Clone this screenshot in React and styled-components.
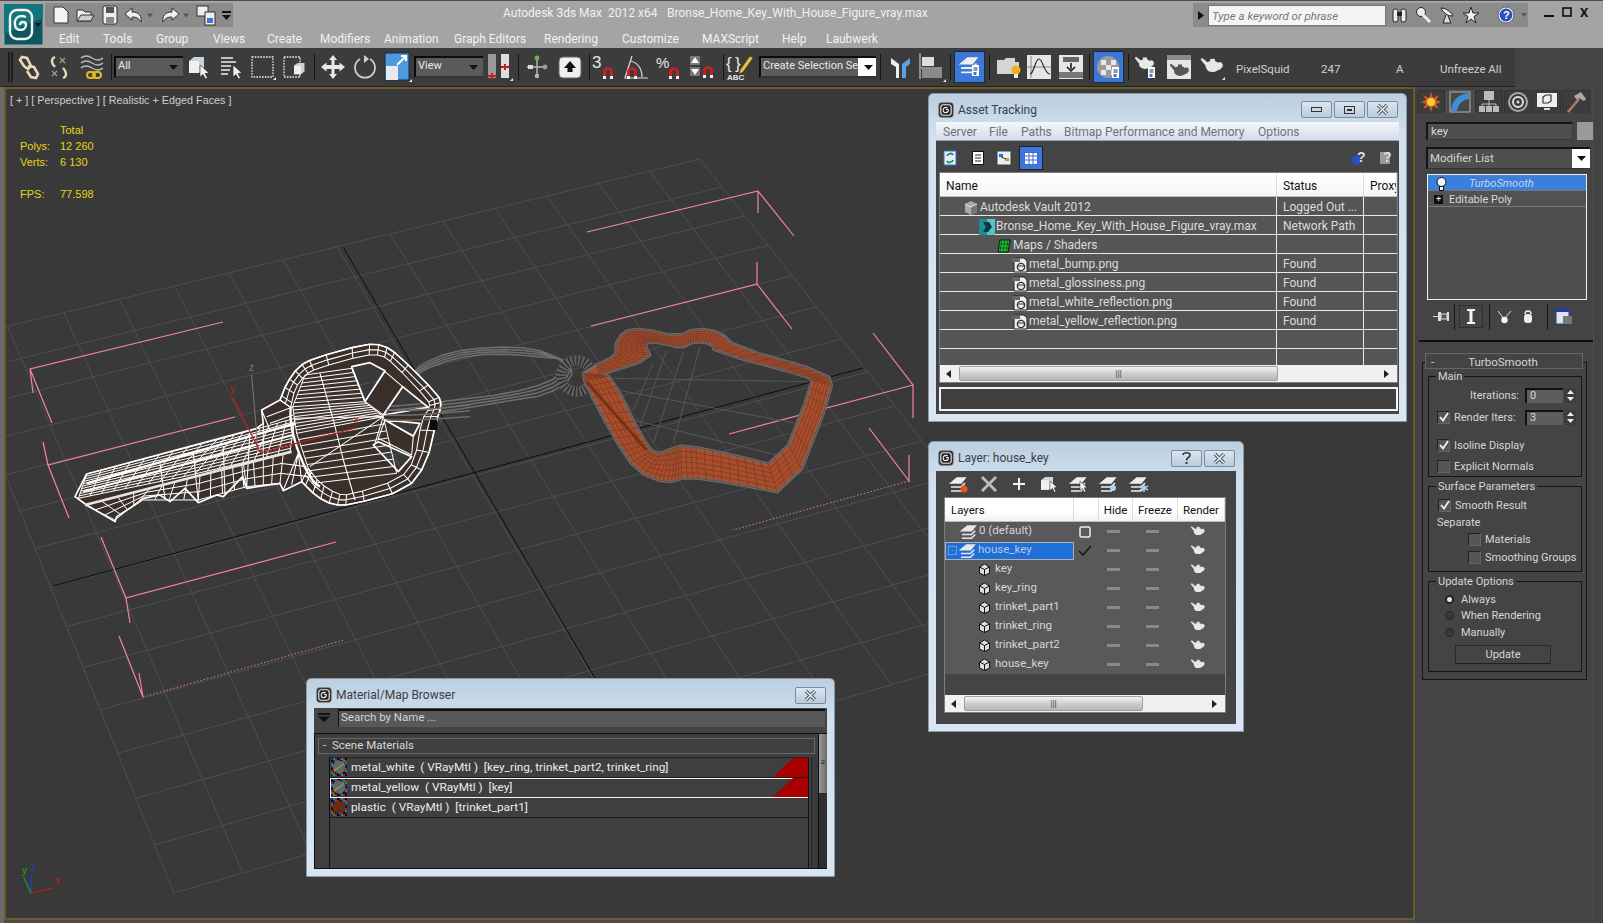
import React from "react";
import styled, { createGlobalStyle } from "styled-components";

const uiFont = `Roboto, "Noto Sans", sans-serif`;

const GlobalStyle = createGlobalStyle`
	html, body { margin: 0; padding: 0; background: #3d3d3d; }
	* { box-sizing: border-box; }
`;

const Page = styled.div`
	position: relative;
	width: 1603px;
	height: 923px;
	overflow: hidden;
	background: #4a4a4a;
	font-family: ${uiFont};
	font-size: 11.5px;
	color: #d6d6d6;
`;

/* ---------- header ---------- */

const Header = styled.div`
	display: flex;
	height: 48px;
	padding-left: 4px;
	background: #a4a4a4;
	border-top: 1px solid #4c4c4c;
`;
const LogoBox = styled.svg`
	flex: none;
	width: 39px;
	height: 41px;
	margin-top: 3px;
`;
const HeaderColumn = styled.div`
	margin-left: 2px;
	flex: 1;
	min-width: 0;
`;
const TitleRow = styled.div`
	display: flex;
	height: 24px;
	margin-top: 2px;
`;
const QuickBar = styled.div`
	flex: none;
	width: 188px;
	display: flex;
	align-items: center;
	padding-left: 6px;
	gap: 1px;
	background: #8b8b8b;
`;
const TitleText = styled.div`
	flex: none;
	width: ${p => p.$w}px;
	margin-left: ${p => p.$ml || 0}px;
	padding-top: 2px;
	line-height: 17px;
	font-size: 12px;
	color: #f0f0f0;
	white-space: pre;
`;
const SearchGroup = styled.div`
	flex: none;
	width: 335px;
	display: flex;
	align-items: center;
	background: #8b8b8b;
	padding-left: 5px;
`;
const SearchInput = styled.div`
	width: 178px;
	height: 21px;
	margin-left: 4px;
	padding-left: 3px;
	line-height: 21px;
	background: #f4f4f4;
	border: 1px solid #777;
	color: #777;
	font-style: italic;
	font-size: 11.5px;
`;
const WinControls = styled.div`
	display: flex;
	gap: 8px;
	margin-left: 16px;
	align-items: center;
	height: 18px;
	color: #111;
	font-weight: 700;
	font-size: 13px;
`;
const MenuRow = styled.div`
	display: flex;
	height: 18px;
	margin-top: 3px;
	padding-left: 14px;
`;
const MenuItem = styled.div`
	flex: none;
	width: ${p => p.$w}px;
	font-size: 12px;
	line-height: 18px;
	color: #f2f2f2;
`;

/* ---------- main toolbar ---------- */

const ToolbarWrap = styled.div`
	height: 39px;
	background: #444;
`;
const Toolbar = styled.div`
	display: flex;
	align-items: center;
	width: 1515px;
	height: 39px;
	padding-left: 8px;
	background: #3c3c3c;
	border-bottom: 1px solid #222;
`;
const Grip = styled.div`
	flex: none;
	width: 5px;
	height: 30px;
	border-left: 2px solid #1c1c1c;
	border-right: 2px solid #1c1c1c;
`;
const Tool = styled.div`
	flex: none;
	width: ${p => p.$w}px;
	height: ${p => (p.$on ? 32 : 30)}px;
	display: flex;
	align-items: center;
	justify-content: center;
	background: ${p => (p.$on ? "#3d78d8" : "transparent")};
	border: ${p => (p.$on ? "1px solid #1a2a40" : "none")};
`;
const ToolSep = styled.div`
	flex: none;
	width: ${p => p.$w}px;
	height: 26px;
	display: flex;
	justify-content: center;
	&::before {
		content: "";
		width: 1px;
		background: #161616;
	}
`;
const Spacer = styled.div`
	flex: none;
	width: ${p => p.$w}px;
`;
const Combo = styled.div`
	flex: none;
	width: ${p => p.$w}px;
	height: 22px;
	display: flex;
	align-items: center;
	justify-content: space-between;
	padding: 0 4px 3px 2px;
	background: #5a5a5a;
	border: 2px solid #0c0c0c;
	border-right: none;
	border-bottom-color: #333;
	font-size: 11px;
	color: #e8e8e8;
	white-space: nowrap;
	overflow: hidden;
`;
const ComboEnd = styled.span`
	flex: none;
	width: 20px;
	margin: -3px -4px -6px 0;
	align-self: stretch;
	display: flex;
	align-items: center;
	justify-content: center;
	background: ${p => (p.$dark ? "#5a5a5a" : "#fff")};
	color: #111;
	font-size: 9px;
`;
const ToolLabel = styled.div`
	flex: none;
	width: ${p => p.$w}px;
	margin-top: 3px;
	font-size: 11.5px;
	color: #cfcfcf;
	white-space: nowrap;
`;
const Icon = styled.svg`
	display: block;
	flex: none;
	overflow: visible;
`;

/* ---------- viewport ---------- */

const Body = styled.div`
	display: flex;
	height: 836px;
`;
const LeftStrip = styled.div`
	flex: none;
	width: 4px;
	background: #6b6b6b;
`;
const Viewport = styled.div`
	position: relative;
	flex: none;
	width: 1411px;
	height: 833px;
	background: #393939;
	border: 2px solid #6b5b24;
	overflow: hidden;
`;
const Scene = styled.svg`
	display: block;
`;
const ViewLabel = styled.div`
	position: absolute;
	left: 4px;
	top: 4px;
	font-family: "Liberation Sans", sans-serif;
	font-size: 10.8px;
	line-height: 15px;
	color: #cfcfcf;
`;
const Stats = styled.div`
	position: absolute;
	left: 14px;
	top: 33px;
	display: grid;
	grid-template-columns: 40px auto;
	grid-auto-rows: 16px;
	font-family: "Liberation Sans", sans-serif;
	font-size: 11px;
	line-height: 16px;
	color: #e6d516;
`;

/* ---------- command panel ---------- */

const Panel = styled.div`
	flex: 1;
	padding-top: 3px;
	background: linear-gradient(90deg, #444 178px, #505050 178px, #505050 179px, #434343 179px);
	font-size: 11px;
`;
const PanelTabs = styled.div`
	display: flex;
	gap: 1px;
	margin-left: 2px;
	height: 23px;
`;
const PanelTab = styled.div`
	width: 28px;
	height: 23px;
	display: flex;
	align-items: center;
	justify-content: center;
	background: ${p => (p.$on ? "#484848" : "#3c3c3c")};
	border: 1px solid ${p => (p.$on ? "#555" : "#333")};
	border-bottom: none;
	border-radius: 3px 3px 0 0;
`;
const NameRow = styled.div`
	display: flex;
	margin: 9px 0 0 11px;
	height: 18px;
`;
const Field = styled.div`
	width: ${p => p.$w}px;
	height: ${p => p.$h}px;
	padding-left: ${p => p.$pl || 3}px;
	line-height: ${p => p.$h - 4}px;
	background: #4f4f4f;
	border-top: 2px solid #141414;
	border-left: 2px solid #141414;
	border-right: 1px solid #3a3a3a;
	border-bottom: 1px solid #3a3a3a;
	color: #d8d8d8;
	font-size: 11.5px;
	white-space: nowrap;
`;
const ColorSwatch = styled.div`
	width: 16px;
	height: 18px;
	margin-left: 4px;
	background: #9a9a9a;
`;
const ModList = styled.div`
	display: flex;
	justify-content: space-between;
	width: 164px;
	height: 22px;
	margin: 7px 0 0 11px;
	padding-left: 2px;
	line-height: 19px;
	background: #4f4f4f;
	border-top: 2px solid #141414;
	border-left: 2px solid #141414;
	border-bottom: 1px solid #333;
	font-size: 11.5px;
`;
const ModArrow = styled.span`
	width: 18px;
	background: #fff;
	display: flex;
	align-items: center;
	justify-content: center;
`;
const StackBox = styled.div`
	width: 160px;
	height: 126px;
	margin: 5px 0 0 12px;
	background: #4f4f4f;
	border: 1px solid #f0f0f0;
`;
const StackRow = styled.div`
	display: flex;
	align-items: center;
	height: 16px;
	padding-left: ${p => p.$pl}px;
	padding-top: 2px;
	gap: ${p => p.$gap || 0}px;
	background: ${p => (p.$on ? "#3b7edc" : "#525252")};
	border-bottom: 1px solid #777;
	color: ${p => (p.$on ? "#c8d4e8" : "#d8d8d8")};
	font-style: ${p => (p.$on ? "italic" : "normal")};
	font-size: 11px;
`;
const StackPlus = styled.span`
	width: 9px;
	height: 9px;
	background: #111;
	color: #fff;
	font-size: 9px;
	line-height: 8px;
	text-align: center;
`;
const StackTools = styled.div`
	display: flex;
	align-items: center;
	height: 23px;
	margin: 5px 0 0 13px;
`;
const StackBtn = styled.div`
	flex: none;
	width: ${p => p.$w}px;
	height: 23px;
	display: flex;
	align-items: center;
	justify-content: center;
	border: ${p => (p.$on ? "1px solid #2e2e2e" : "none")};
`;
const Divider = styled.div`
	width: 174px;
	height: 2px;
	margin: 12px 0 0 4px;
	background: #111;
`;
const RolloutHead = styled.div`
	position: relative;
	z-index: 1;
	display: flex;
	width: 158px;
	height: 16px;
	margin: 11px 0 0 10px;
	line-height: 16px;
	background: #444;
	border: 1px solid #666;
	font-size: 11.5px;
`;
const RolloutDash = styled.span`
	width: 6px;
	margin-left: 5px;
`;
const RolloutTitle = styled.span`
	flex: 1;
	text-align: center;
	padding-right: 13px;
`;
const RolloutBody = styled.div`
	width: 165px;
	height: 318px;
	margin: -7px 0 0 7px;
	padding: 13px 4px 0 5px;
	border: 1px solid #151515;
`;
const Group = styled.div`
	position: relative;
	height: ${p => p.$h}px;
	margin-bottom: 9px;
	padding-top: 1px;
	border: 1px solid #151515;
`;
const GroupLegend = styled.span`
	position: absolute;
	top: -7px;
	left: 7px;
	padding: 0 2px;
	background: #444;
	line-height: 14px;
	font-size: 11px;
`;
const OptRow = styled.div`
	display: flex;
	align-items: center;
	height: 16px;
	margin-top: ${p => p.$mt || 0}px;
	padding-left: ${p => p.$pl || 0}px;
	gap: 4px;
	white-space: nowrap;
`;
const OptLabel = styled.span`
	flex: ${p => (p.$grow ? 1 : "none")};
	text-align: ${p => (p.$right ? "right" : "left")};
	padding-right: ${p => (p.$right ? 2 : 0)}px;
`;
const Check = styled.span`
	flex: none;
	width: 13px;
	height: 13px;
	display: flex;
	align-items: center;
	justify-content: center;
	background: #555;
	border-top: 1px solid #222;
	border-left: 1px solid #222;
	border-right: 1px solid #666;
	border-bottom: 1px solid #666;
`;
const SpinField = styled.span`
	flex: none;
	width: 38px;
	height: 15px;
	padding-left: 3px;
	line-height: 12px;
	background: #5d5d5d;
	border-top: 2px solid #111;
	border-left: 2px solid #111;
`;
const SpinArrows = styled.span`
	flex: none;
	width: 12px;
	height: 15px;
	margin-left: -3px;
	margin-right: 5px;
	background: #3d3d3d;
	display: flex;
	align-items: center;
	justify-content: center;
`;
const Radio = styled.span`
	flex: none;
	width: 9px;
	height: 9px;
	margin-left: 1px;
	margin-right: 3px;
	border-radius: 50%;
	background: ${p => (p.$on ? "#e8e8e8" : "#3a3a3a")};
	border: ${p => (p.$on ? "2px solid #222" : "1px solid #222")};
`;
const UpdateBtn = styled.div`
	width: 96px;
	height: 19px;
	margin: 5px 0 0 26px;
	line-height: 18px;
	text-align: center;
	background: #444;
	border: 1px solid #2c2c2c;
	border-bottom-color: #1f1f1f;
`;

/* ---------- floating windows ---------- */

const Win = styled.div`
	position: absolute;
	left: ${p => p.$x}px;
	top: ${p => p.$y}px;
	width: ${p => p.$w}px;
	height: ${p => p.$h}px;
	padding: 0 7px 7px;
	display: flex;
	flex-direction: column;
	background: linear-gradient(180deg, #bccfdf 0, #d0e0ee 40px, #d8e6f3 100%);
	border: 1px solid #8d98a2;
	border-radius: 5px 5px 0 0;
`;
const WinTitle = styled.div`
	flex: none;
	height: ${p => p.$h}px;
	display: flex;
	align-items: center;
	padding-top: 3px;
	padding-left: ${p => p.$pl || 2}px;
	gap: 4px;
	font-size: 12px;
	color: #3a4046;
`;
const WinButtons = styled.div`
	display: flex;
	gap: 2px;
	margin-left: auto;
	padding-right: 1px;
`;
const WinBtn = styled.div`
	width: 31px;
	height: 17px;
	display: flex;
	align-items: center;
	justify-content: center;
	background: linear-gradient(180deg, #dbe6f0, #b9cbdb);
	border: 1px solid #7c8c9b;
	border-radius: 2px;
	color: #333;
`;
const WinMenu = styled.div`
	flex: none;
	display: flex;
	height: 19px;
	padding-left: 7px;
	background: linear-gradient(180deg, #f4f6fc, #d3dbec);
	border-bottom: 1px solid #9aa4b4;
	color: #6f7278;
	font-size: 12px;
	line-height: 20px;
`;
const WinMenuItem = styled.div`
	flex: none;
	width: ${p => p.$w}px;
`;
const WinBody = styled.div`
	flex: 1;
	min-height: 0;
	display: flex;
	flex-direction: column;
	background: #444;
`;
const AssetTools = styled.div`
	flex: none;
	display: flex;
	align-items: center;
	height: 31px;
	padding-left: 4px;
	padding-top: 3px;
`;
const AssetTool = styled.div`
	flex: none;
	width: ${p => p.$w}px;
	height: 24px;
	display: flex;
	align-items: center;
	justify-content: center;
	background: ${p => (p.$on ? "#3d78d8" : "transparent")};
	border: ${p => (p.$on ? "1px solid #15243a" : "none")};
	margin-left: ${p => p.$ml || 0}px;
`;
const TableFrame = styled.div`
	flex: none;
	width: ${p => p.$w}px;
	height: ${p => p.$h}px;
	margin-left: ${p => p.$ml}px;
	display: flex;
	flex-direction: column;
	border: 1px solid #7d7d7d;
	overflow: hidden;
`;
const AssetHead = styled.div`
	flex: none;
	display: grid;
	grid-template-columns: 337px 87px 1fr;
	height: 24px;
	background: linear-gradient(180deg, #fff, #f6f6f6);
	border-bottom: 1px solid #bbb;
	color: #111;
	font-size: 12px;
	line-height: 26px;
`;
const HeadCell = styled.div`
	padding-left: ${p => p.$pl || 0}px;
	text-align: ${p => (p.$center ? "center" : "left")};
	border-right: 1px solid #ddd;
	white-space: nowrap;
	overflow: hidden;
`;
const AssetRows = styled.div`
	flex: 1;
	min-height: 0;
	overflow: hidden;
	background: #555;
`;
const AssetRow = styled.div`
	display: grid;
	grid-template-columns: 337px 87px 1fr;
	height: 19px;
	border-bottom: 1px solid #e8e8e8;
	font-size: 12px;
	line-height: 19px;
	color: #dcdcdc;
`;
const NameCell = styled.div`
	display: flex;
	align-items: center;
	gap: 1px;
	padding-left: ${p => p.$indent}px;
	padding-top: 1px;
	border-right: 1px solid #e8e8e8;
	white-space: nowrap;
`;
const StatusCell = styled.div`
	padding: 1px 0 0 6px;
	border-right: 1px solid #e8e8e8;
	white-space: nowrap;
`;
const HScroll = styled.div`
	flex: none;
	display: flex;
	align-items: center;
	height: 17px;
	background: #f0f0f0;
	padding: 0 8px 0 6px;
`;
const ScrollThumb = styled.div`
	width: ${p => p.$w}px;
	height: 15px;
	margin-left: ${p => p.$ml}px;
	margin-right: auto;
	display: flex;
	align-items: center;
	justify-content: center;
	background: linear-gradient(180deg, #f2f2f2, #cfcfcf 50%, #b5b5b5);
	border: 1px solid #a0a0a0;
	border-radius: 2px;
	color: #444;
	font-size: 9px;
	line-height: 12px;
`;
const StatusBox = styled.div`
	flex: none;
	width: 459px;
	height: 24px;
	margin: 4px 0 0 3px;
	background: #3f3f3f;
	border: 2px solid #f4f4f4;
`;
const LayerTools = styled.div`
	flex: none;
	display: flex;
	align-items: center;
	height: 26px;
	padding-left: 8px;
`;
const LayerTool = styled.div`
	flex: none;
	width: 30px;
	display: flex;
	justify-content: center;
`;
const LayerHead = styled.div`
	flex: none;
	display: grid;
	grid-template-columns: 129px 25px 34px 45px 47px;
	height: 24px;
	background: linear-gradient(180deg, #fff, #fff 55%, #f2f2f2);
	border-bottom: 1px solid #bbb;
	color: #111;
	font-size: 11.5px;
	line-height: 24px;
`;
const LayerRows = styled.div`
	flex: 1;
	min-height: 0;
	background: #444;
`;
const LayerRow = styled.div`
	display: grid;
	grid-template-columns: 129px 22px 34px 45px 47px;
	align-items: center;
	height: 19px;
	background: #595959;
	font-size: 11.5px;
	color: #d6d6d6;
`;
const LayerName = styled.div`
	display: flex;
	align-items: center;
	height: 18px;
	gap: ${p => p.$gap || 3}px;
	padding-left: ${p => p.$pl}px;
	background: ${p => (p.$on ? "#1f6fd9" : "transparent")};
	border: ${p => (p.$on ? "1px solid #b0b0b0" : "none")};
	color: ${p => (p.$on ? "#b8c8e0" : "#d6d6d6")};
`;
const LayerText = styled.span`
	margin-top: -3px;
`;
const TreeBox = styled.span`
	width: 9px;
	height: 9px;
	margin-right: 1px;
	border: 1px solid #6f9ad8;
	color: #6f9ad8;
	font-size: 9px;
	line-height: 6px;
	text-align: center;
`;
const LayerCell = styled.div`
	display: flex;
	justify-content: center;
	align-items: center;
`;
const Dash = styled.span`
	width: 13px;
	height: 3px;
	background: #8a8a8a;
`;
const BrowserSearch = styled.div`
	flex: none;
	display: flex;
	align-items: center;
	height: 26px;
	padding: 0 0 6px 4px;
	border-bottom: 1px solid #111;
`;
const SearchField = styled.div`
	flex: 1;
	height: 18px;
	margin: 0 2px 0 8px;
	padding-left: 2px;
	line-height: 13px;
	background: #585858;
	border-top: 2px solid #111;
	border-left: 1px solid #111;
	color: #d4d4d4;
	font-size: 11.5px;
`;
const BrowserMain = styled.div`
	flex: 1;
	min-height: 0;
	display: flex;
	background: #3f3f3f;
	border-bottom: 1px solid #111;
	border-left: 1px solid #111;
`;
const BrowserList = styled.div`
	flex: 1;
	min-width: 0;
	padding: 4px 3px 0 3px;
	display: flex;
	flex-direction: column;
`;
const SectionHead = styled.div`
	flex: none;
	height: 16px;
	padding-left: 4px;
	line-height: 13px;
	border: 1px solid #666;
	color: #d8d8d8;
	font-size: 11.5px;
	white-space: pre;
`;
const MatArea = styled.div`
	flex: 1;
	min-height: 0;
	display: flex;
	margin: 3px -3px 0 11px;
`;
const MatList = styled.div`
	flex: 1;
	min-width: 0;
	border-left: 1px solid #111;
	border-right: 1px solid #111;
	border-top: 1px solid #222;
`;
const MatRow = styled.div`
	display: flex;
	align-items: stretch;
	height: 20px;
	border-bottom: 1px solid #1c1c1c;
	outline: ${p => (p.$on ? "1px solid #f4f4f4" : "none")};
	outline-offset: -1px;
	font-size: 11.8px;
	line-height: 19px;
	color: #ececec;
	white-space: pre;
`;
const MatName = styled.span`
	margin-left: 4px;
`;
const MatFlag = styled.span`
	margin-left: auto;
	width: 35px;
	background: #a80000;
	clip-path: polygon(57% 0, 100% 0, 100% 100%, 0 100%);
`;
const VTrack = styled.div`
	flex: none;
	width: 7px;
	margin-left: 2px;
	background: #3a3a3a;
	border-left: 1px solid #222;
`;
const VScroll = styled.div`
	flex: none;
	width: 9px;
	background: #2f2f2f;
	border-left: 1px solid #111;
`;
const VThumb = styled.div`
	height: 59px;
	padding-top: 27px;
	background: linear-gradient(90deg, #9a9a9a, #6a6a6a);
	color: #222;
	font-size: 8px;
	line-height: 3px;
	text-align: center;
`;

/* ---------- drawing helpers ---------- */

const mix = (a, b, t) => [a[0] + (b[0] - a[0]) * t, a[1] + (b[1] - a[1]) * t];
const toPath = pts => "M" + pts.map(p => p[0].toFixed(1) + " " + p[1].toFixed(1)).join("L");
const densify = (poly, n) => {
	const out = [];
	poly.slice(0, -1).forEach((p, i) => {
		for (let k = 0; k < n; k++) out.push(mix(p, poly[i + 1], k / n));
	});
	out.push(poly[poly.length - 1]);
	return out;
};
// cuts the corners of a polyline, keeps both ends
const smooth = poly => {
	const out = [poly[0]];
	poly.slice(0, -1).forEach((p, i) => out.push(mix(p, poly[i + 1], 0.25), mix(p, poly[i + 1], 0.75)));
	out.push(poly[poly.length - 1]);
	return out;
};
// rails run along the two polylines, rungs tie them together
const strip = (a, b, rails, sub, rungs = true) => {
	const A = densify(a, sub);
	const B = densify(b, sub);
	let d = "";
	for (let r = 0; r <= rails; r++) d += toPath(A.map((p, i) => mix(p, B[i], r / rails)));
	if (rungs) A.forEach((p, i) => (d += toPath([p, B[i]])));
	return d;
};
const quadMap = (p0, p1, p2, p3) => {
	const dx1 = p1[0] - p2[0], dx2 = p3[0] - p2[0], sx = p0[0] - p1[0] + p2[0] - p3[0];
	const dy1 = p1[1] - p2[1], dy2 = p3[1] - p2[1], sy = p0[1] - p1[1] + p2[1] - p3[1];
	const den = dx1 * dy2 - dx2 * dy1;
	const g = (sx * dy2 - dx2 * sy) / den;
	const h = (dx1 * sy - sx * dy1) / den;
	const a = p1[0] - p0[0] + g * p1[0], b = p3[0] - p0[0] + h * p3[0];
	const d = p1[1] - p0[1] + g * p1[1], e = p3[1] - p0[1] + h * p3[1];
	return (u, v) => {
		const w = g * u + h * v + 1;
		return [(a * u + b * v + p0[0]) / w, (d * u + e * v + p0[1]) / w];
	};
};

const gridAt = quadMap([-49, 340], [700, 159], [1073, 632], [174, 893]);
let gridPath = "";
for (let i = 0; i <= 14; i++) {
	gridPath += toPath([gridAt(i / 14, 0), gridAt(i / 14, 1)]);
	gridPath += toPath([gridAt(0, i / 14), gridAt(1, i / 14)]);
}

const pinkSolid = [
	[[223, 322], [30, 369], [33, 393]], [[30, 369], [52, 423]],
	[[235, 417], [48, 465], [43, 442]], [[48, 465], [69, 518]],
	[[336, 542], [126, 598], [130, 623]], [[126, 598], [101, 537]],
	[[119, 636], [143, 697], [139, 673]],
	[[587, 232], [758, 191], [758, 213]], [[758, 191], [794, 236]],
	[[591, 326], [757, 284], [757, 262]], [[757, 284], [792, 329]],
	[[873, 333], [913, 385], [913, 418]], [[729, 434], [913, 385]],
	[[869, 428], [909, 481], [909, 455]],
].map(toPath).join("");

// key, coordinates taken at 3x
const bowOuter = smooth([[690, 240], [710, 190], [745, 140], [790, 115], [945, 72], [1000, 75], [1045, 105], [1165, 225], [1175, 255], [1160, 300], [1130, 430], [1070, 510], [900, 555], [850, 555], [800, 530], [755, 485]]);
const bowInner = smooth([[722, 262], [735, 205], [765, 165], [800, 145], [945, 105], [995, 105], [1030, 130], [1135, 240], [1140, 262], [1115, 300], [1095, 420], [1050, 478], [900, 525], [860, 522], [810, 490], [775, 445]]);
const keyOuter = [[635, 270], ...bowOuter, [700, 512], [690, 490], [590, 505], [578, 470], [520, 530], [500, 525], [445, 548], [405, 505], [360, 545], [330, 525], [280, 535], [270, 545], [200, 590], [195, 605], [110, 555], [75, 530], [110, 462], [620, 325], [640, 310]];
const keyHoles = [
	[[905, 140], [960, 128], [1005, 152], [945, 245]],
	[[1058, 200], [1135, 262], [1000, 285]],
	[[1005, 300], [1110, 310], [1090, 348]],
	[[985, 365], [1085, 410], [1045, 455], [970, 375]],
];
const keyFill = toPath(keyOuter) + "Z" + keyHoles.map(h => toPath(h) + "Z").join("");
const bowBand = strip(bowOuter, bowInner, 2, 1);
const bowPlate = strip(
	[[765, 165], [728, 260], [740, 340], [790, 490]],
	[[905, 145], [945, 245], [1000, 290], [1040, 460]],
	1, 8
);
const bowMisc = [
	[[810, 160], [850, 300], [880, 420], [915, 540]],
	[[945, 245], [1005, 155], [1058, 200], [1000, 285], [945, 245]],
	[[1005, 300], [1090, 350], [1085, 405], [985, 355], [1005, 300]],
	[[730, 295], [1000, 290]], [[1000, 290], [780, 440]], [[1000, 290], [975, 370]],
	[[635, 270], [660, 330]], [[690, 240], [722, 262]], [[650, 290], [730, 260]], [[660, 310], [730, 285]],
	[[745, 400], [700, 510]], [[745, 400], [725, 495]], [[745, 400], [755, 485]], [[690, 430], [770, 440]], [[690, 460], [775, 470]],
	[[640, 310], [640, 420]], [[600, 340], [590, 505]], [[575, 430], [582, 505]],
	[[520, 380], [525, 525]], [[430, 400], [445, 545]], [[330, 430], [345, 535]],
].map(toPath).join("");
const bladeTop = strip([[735, 295], [500, 360], [110, 462]], [[720, 395], [400, 470], [85, 535]], 10, 9);
const bladeLow = strip(
	[[700, 400], [580, 430], [450, 465], [300, 505], [105, 555]],
	[[690, 490], [590, 500], [445, 540], [270, 540], [195, 600]],
	3, 4
);

// trinket, coordinates taken at 3x
const houseOut = smooth([[590, 165], [650, 135], [645, 105], [670, 65], [720, 55], [835, 80], [885, 55], [960, 65], [1005, 110], [1285, 190], [1298, 240], [1175, 555], [1000, 520], [860, 500], [800, 520], [710, 485], [640, 380], [555, 220], [550, 190]]);
const houseIn = smooth([[600, 195], [755, 145], [735, 105], [745, 95], [790, 100], [845, 115], [880, 95], [935, 100], [945, 125], [1225, 200], [1240, 215], [1140, 470], [1000, 435], [850, 405], [820, 415], [765, 435], [725, 380], [635, 200], [600, 195]]);
const houseFill = toPath(houseOut) + "Z" + toPath(houseIn) + "Z";
const houseMesh = strip(houseOut, houseIn, 6, 3);
const innerWire = [
	[[640, 205], [1225, 215]], [[760, 160], [700, 300]], [[800, 120], [720, 350]], [[850, 125], [760, 400]],
	[[900, 110], [820, 400]], [[650, 240], [1190, 340]], [[700, 330], [1150, 440]],
].map(toPath).join("");
const ringMesh = strip(
	smooth([[-40, 290], [130, 275], [330, 250], [440, 220], [500, 180], [480, 145], [400, 115], [280, 110], [150, 125], [60, 165], [45, 185]]),
	smooth([[-40, 325], [130, 305], [330, 272], [440, 255], [520, 205], [505, 150], [420, 140], [280, 130], [160, 145], [70, 180], [55, 195]]),
	3, 2, false
);

/* ---------- icons ---------- */

const Spiral = ({ size = 16 }) => (
	<Icon width={size} height={size} viewBox="0 0 20 20">
		<rect x="1" y="1" width="18" height="18" rx="3" fill="#222" stroke="#777" />
		<rect x="3.5" y="3.5" width="13" height="13" rx="3" fill="none" stroke="#eee" strokeWidth="1.4" />
		<path d="M12 7 C8 6 6 8 6.5 11 C7 14 12 14 13 11 C13.5 9 11 8.5 10 10" fill="none" stroke="#eee" strokeWidth="1.4" />
	</Icon>
);

const Ico = ({ w = 26, h = 26, children }) => (
	<Icon width={w} height={h} viewBox={`0 0 ${w} ${h}`}>{children}</Icon>
);

const CloseX = () => (
	<Icon width="13" height="11" viewBox="0 0 13 11">
		<path d="M2 1 L11 10 M11 1 L2 10" stroke="#4a5560" strokeWidth="3.4" />
		<path d="M2 1 L11 10 M11 1 L2 10" stroke="#f4f6f8" strokeWidth="1.4" />
	</Icon>
);

const Magnet = ({ x, y }) => (
	<g transform={`translate(${x} ${y})`}>
		<path d="M0 11 V5 a5 5 0 0 1 10 0 V11 H7 V5 a2 2 0 0 0 -4 0 V11Z" fill="#c42020" />
		<rect x="0" y="9" width="3" height="3" fill="#eee" />
		<rect x="7" y="9" width="3" height="3" fill="#eee" />
	</g>
);
const Cursor = ({ x, y, s = 1 }) => (
	<path transform={`translate(${x} ${y}) scale(${s})`} d="M0 0 V12 L3 9.5 L5.5 14 L7.5 13 L5 8.5 L9 8Z" fill="#f2f2f2" stroke="#222" strokeWidth=".6" />
);
const Corner = () => <path d="M23 26 L26 23 V26Z" fill="#eee" />;
const Cube = ({ x, y, s = 1 }) => (
	<g transform={`translate(${x} ${y}) scale(${s})`}>
		<path d="M0 4 L5 0 H15 V12 L10 16 H0Z" fill="#c9d2d8" />
		<path d="M0 4 H10 V16 H0Z" fill="#eef1f3" />
	</g>
);
const Teapot = ({ x, y, s = 1, fill = "#e8e8e8" }) => (
	<g transform={`translate(${x} ${y}) scale(${s})`}>
		<ellipse cx="10" cy="9" rx="6" ry="5" fill={fill} />
		<path d="M4 8 L0 3 L1 2 L6 6Z M15 6 C20 4 20 12 14 12" fill={fill} stroke={fill} strokeWidth=".6" />
		<rect x="8" y="2.5" width="4" height="2" fill={fill} />
	</g>
);
const Doc = ({ x, y }) => (
	<g transform={`translate(${x} ${y})`}>
		<rect x="0" y="0" width="7" height="11" fill="#fff" />
		<path d="M1.5 3 H5.5 M1.5 5 H5.5" stroke="#234" />
		<rect x="1.5" y="7" width="3" height="3" fill="#3a78d8" />
	</g>
);

const LayerStack = ({ x = 0, y = 0, s = 1, c = "#eee" }) => (
	<g transform={`translate(${x} ${y}) scale(${s})`} fill="none" stroke={c} strokeWidth="1.6">
		<path d="M1 6 L7 1 H15 L11 6Z" fill={c} />
		<path d="M1 10 H11 L15 6" />
		<path d="M1 14 H11 L15 10" />
	</g>
);

const toolIcons = {
	link: <Ico><g fill="none" stroke="#e6d9b5" strokeWidth="2.6"><path d="M7 3 L12 4 L16 12 L13 15 L9 12 L5 6Z" /><path d="M13 12 L19 13 L23 20 L21 24 L16 23 L12 17" /></g></Ico>,
	unlink: <Ico><g fill="none" stroke="#e6d9b5" strokeWidth="2.4"><path d="M9 3 C4 5 6 10 9 13" /><path d="M17 24 C22 22 20 17 17 14" /></g><g stroke="#9a9a9a" strokeWidth="1.4"><path d="M14 4 l5 5 M19 4 l-5 5 M6 17 l5 5 M11 17 l-5 5" /></g></Ico>,
	bind: <Ico><g fill="none" stroke="#bcbcbc" strokeWidth="1.5"><path d="M2 4 q5 -4 11 0 t11 0" /><path d="M2 9 q5 -4 11 0 t11 0" /><path d="M2 14 q5 -4 11 0 t11 0" /></g><g fill="none" stroke="#e0b820" strokeWidth="2"><rect x="8" y="18" width="8" height="6" rx="3" /><rect x="14" y="18" width="8" height="6" rx="3" /></g></Ico>,
	select: <Ico><Cube x="2" y="3" /><Cursor x="13" y="11" /></Ico>,
	byName: <Ico><path d="M2 4 H14 M2 8 H17 M2 12 H12 M2 16 H11 M2 20 H9" stroke="#eee" strokeWidth="1.3" /><path transform="translate(14 11)" d="M0 0 V12 L3 9.5 L5.5 14 L7.5 13 L5 8.5 L9 8Z" fill="#eee" stroke="#222" strokeWidth=".6" /></Ico>,
	region: <Ico><rect x="2" y="3" width="21" height="20" fill="none" stroke="#eee" strokeWidth="1.3" strokeDasharray="1.6 1.2" /><Corner /></Ico>,
	windowSel: <Ico><rect x="2" y="3" width="16" height="20" fill="none" stroke="#eee" strokeWidth="1.3" strokeDasharray="1.6 1.2" /><Cube x="12" y="9" s=".7" /></Ico>,
	move: <Ico><path d="M13 1 L17 6 H14.5 V11 H19.5 V8.5 L25 13 L19.5 17.5 V15 H14.5 V20 H17 L13 25 L9 20 H11.5 V15 H6.5 V17.5 L1 13 L6.5 8.5 V11 H11.5 V6 H9Z" fill="#e8e8e8" /></Ico>,
	rotate: <Ico><path d="M8 5 A10 10 0 1 0 18 5" fill="none" stroke="#cfcfcf" strokeWidth="1.8" /><path d="M12 1 V9 L17 5Z" fill="#cfcfcf" /></Ico>,
	scale: <Ico w={28} h={30}><rect x="1" y="1" width="24" height="27" fill="#4d9adf" stroke="#1a2a40" /><rect x="2" y="14" width="12" height="14" fill="#eaeaea" /><path d="M13 13 L22 4 M17 4 H22 V9" stroke="#fff" strokeWidth="2" fill="none" /><path d="M25 30 L28 27 V30Z" fill="#eee" /></Ico>,
	pivot: <Ico w={26} h={28}><rect x="1" y="1" width="8" height="24" fill="#9a9a9a" /><rect x="14" y="1" width="8" height="24" fill="#ddd" /><path d="M1 23 h8 M14 14 h8" stroke="#d21a1a" strokeWidth="2" /><path d="M5 20 v6 M18 11 v6" stroke="#d21a1a" strokeWidth="2" /><path d="M23 28 L26 25 V28Z" fill="#eee" /></Ico>,
	manip: <Ico><path d="M13 5 V22 M3 13 H23" stroke="#bbb" strokeWidth="1.4" /><circle cx="13" cy="4" r="2.4" fill="#6fb04a" /><rect x="4" y="11" width="5" height="4" fill="#ddd" /><circle cx="21" cy="13" r="2.4" fill="#9a9a9a" /><circle cx="13" cy="22" r="2.2" fill="#bbb" /></Ico>,
	keyboard: <Ico><rect x="2" y="3" width="22" height="21" rx="4" fill="#efefef" stroke="#666" /><path d="M13 7 L19 14 H15.5 V18 H10.5 V14 H7Z" fill="#111" /></Ico>,
	snap3: <Ico w={30} h={28}><text x="1" y="15" fill="#e8e8e8" fontFamily="Liberation Sans, sans-serif" fontSize="17">3</text><Magnet x="12" y="14" /></Ico>,
	snapAngle: <Ico w={30} h={28}><path d="M10 3 L3 25 H26 M8 8 C15 9 20 15 20 24" fill="none" stroke="#ddd" strokeWidth="1.2" /><Magnet x="5" y="14" /></Ico>,
	snapPercent: <Ico w={30} h={28}><text x="1" y="15" fill="#e8e8e8" fontFamily="Liberation Sans, sans-serif" fontSize="15">%</text><Magnet x="14" y="14" /></Ico>,
	snapSpin: <Ico w={30} h={28}><rect x="2" y="3" width="10" height="9" fill="#777" /><rect x="2" y="14" width="10" height="9" fill="#777" /><path d="M7 4 L11 10 H3Z M3 16 H11 L7 22Z" fill="#fff" /><Magnet x="15" y="13" /></Ico>,
	named: <Ico w={30} h={28}><text x="0" y="16" fill="#e8e8e8" fontFamily="Liberation Sans, sans-serif" fontSize="17">{"{"}</text><text x="9" y="16" fill="#e8e8e8" fontFamily="Liberation Sans, sans-serif" fontSize="17">{"}"}</text><path d="M14 17 L24 3 L27 5 L17 19 L13 21Z" fill="#e6c040" stroke="#333" strokeWidth=".5" /><text x="1" y="27" fill="#e8e8e8" fontFamily="Liberation Sans, sans-serif" fontSize="8" fontWeight="700">ABC</text></Ico>,
	mirror: <Ico><path d="M3 4 L11 10 V24 H8 V13 L3 10Z" fill="#eee" /><path d="M22 4 L14 10 V24 H18 V13 L22 10Z" fill="#5aa0e8" /></Ico>,
	align: <Ico w={28} h={30}><path d="M2 1 V27" stroke="#ddd" /><rect x="4" y="5" width="12" height="9" fill="#ddd" /><rect x="4" y="17" width="20" height="9" fill="#8a8a8a" /><path d="M3 16 H24" stroke="#ddd" /><path d="M25 30 L28 27 V30Z" fill="#eee" /></Ico>,
	layer: <Ico><LayerStack x="3" y="3" s="1.1" /><Doc x="15" y="11" /></Ico>,
	explorer: <Ico><path d="M2 6 H9 L11 4 H20 V8 H24 V20 H2Z" fill="#d5d5d5" /><circle cx="21" cy="16" r="4.5" fill="#f0b020" /><rect x="19" y="20" width="4" height="4" fill="#eee" /></Ico>,
	curve: <Ico><rect x="1" y="1" width="24" height="24" fill="#e6e6e6" /><path d="M5 2 V24 M1 13 H25" stroke="#888" /><path d="M4 20 C8 20 9 5 13 5 C17 5 18 20 24 20" fill="none" stroke="#223" strokeWidth="1.2" /></Ico>,
	schematic: <Ico><rect x="1" y="1" width="24" height="24" fill="#e6e6e6" /><rect x="5" y="3" width="16" height="5" fill="#666" /><path d="M13 9 V15 M9 13 L13 17 L17 13" stroke="#111" strokeWidth="1.5" fill="none" /><rect x="1" y="18" width="24" height="6" fill="#777" /></Ico>,
	material: <Ico><circle cx="12" cy="13" r="11" fill="#9a9a9a" /><path d="M5 6 h5 v5 h-5Z M15 6 h5 v5 h-5Z M10 11 h5 v5 h-5Z M5 16 h5 v5 h-5Z M15 16 h5 v5 h-5Z" fill="#e8e8e8" /><Doc x="16" y="13" /></Ico>,
	renderSetup: <Ico><Teapot x="1" y="1" /><Doc x="14" y="13" /></Ico>,
	renderFrame: <Ico><rect x="1" y="1" width="24" height="24" fill="#e6e6e6" /><rect x="1" y="1" width="24" height="5" fill="#8a8a8a" /><Teapot x="4" y="8" fill="#555" /></Ico>,
	render: <Ico><Teapot x="2" y="2" s="1.15" /><path d="M23 26 L26 23 V26Z" fill="#eee" /></Ico>,
};

const TabIcon = ({ kind }) => {
	if (kind === "burst") return <Ico w={20} h={20}><path d="M10 0 L12 6 L18 3 L15 8 L20 10 L15 12 L18 17 L12 14 L10 20 L8 14 L2 17 L5 12 L0 10 L5 8 L2 3 L8 6Z" fill="#d65a20" /><circle cx="10" cy="10" r="4" fill="#f4d040" /></Ico>;
	if (kind === "arc") return <Ico w={22} h={22}><rect x="1" y="1" width="20" height="20" fill="none" stroke="#ccc" strokeWidth=".8" /><path d="M2 20 C3 9 9 3 20 2 V8 C13 9 9 13 8 20Z" fill="#3f8fd8" /></Ico>;
	if (kind === "tree") return <Ico w={22} h={22}><rect x="6" y="0" width="10" height="9" fill="#bbb" /><path d="M11 9 V13 M4 13 H18 M4 13 V15 M11 13 V15 M18 13 V15" stroke="#bbb" /><rect x="1" y="15" width="6" height="6" fill="#bbb" /><rect x="8" y="15" width="6" height="6" fill="#bbb" /><rect x="15" y="15" width="6" height="6" fill="#bbb" /></Ico>;
	if (kind === "motion") return <Ico w={22} h={22}><circle cx="11" cy="11" r="9" fill="none" stroke="#aaa" strokeWidth="2" /><circle cx="11" cy="11" r="5" fill="none" stroke="#ddd" strokeWidth="2" /><circle cx="11" cy="11" r="1.5" fill="#ddd" /></Ico>;
	if (kind === "display") return <Ico w={22} h={22}><rect x="1" y="2" width="20" height="14" fill="#eee" /><path d="M7 6 L10 4 H15 V10 L12 12 H7Z" fill="none" stroke="#333" strokeWidth="1.2" /><rect x="8" y="17" width="6" height="2" fill="#ddd" /></Ico>;
	return <Ico w={22} h={22}><path d="M3 21 L14 8" stroke="#b07a62" strokeWidth="2.5" /><path d="M9 5 L16 1 L21 8 L19 10 L14 7 L12 9Z" fill="#aaa" /></Ico>;
};

const Arrow = ({ c = "#111" }) => <Icon width="9" height="5" viewBox="0 0 9 5"><path d="M0 0 H9 L4.5 5Z" fill={c} /></Icon>;
const Tick = () => <Icon width="10" height="10" viewBox="0 0 10 10"><path d="M1 5 L4 8.5 L9 1" fill="none" stroke="#f2f2f2" strokeWidth="1.8" /></Icon>;
const FileCube = () => <Ico w={16} h={16}><path d="M2 4 L8 1 L14 4 V12 L8 15 L2 12Z" fill="#aaa" /><path d="M8 7 L14 4 V12 L8 15Z" fill="#777" /><path d="M2 4 L8 7 L14 4" fill="none" stroke="#ddd" /></Ico>;
const MaxFile = () => <Ico w={16} h={16}><rect width="16" height="16" fill="#1d8f96" /><rect x="8" width="8" height="16" fill="#57c3c6" /><path d="M4 3 H10 L13 8 L9 13 H4 L7 8Z" fill="#063b40" /></Ico>;
const MapsIcon = () => <Ico w={16} h={16}><path d="M4 2 H14 L12 14 H2Z" fill="#27c93c" stroke="#111" /><path d="M6 2 L4 14 M9 2 L7 14 M12 2 L10 14 M3 6 H13 M3 10 H12" stroke="#0c5a18" /></Ico>;
const PngIcon = () => <Ico w={16} h={16}><path d="M2 1 H12 L15 4 V15 H2Z" fill="#eee" stroke="#222" /><rect x="0" y="1" width="8" height="4" fill="#666" /><circle cx="9" cy="10" r="3.6" fill="none" stroke="#333" strokeWidth="1.4" /><path d="M5 9 H12" stroke="#333" /></Ico>;
const MeshIcon = () => <Ico w={13} h={13}><path d="M1.5 4 L6.5 1 L11.5 4 V10 L6.5 12.5 L1.5 10Z" fill="#ddd" stroke="#111" /><path d="M1.5 4 L6.5 6.5 L11.5 4 M6.5 6.5 V12.5" fill="none" stroke="#111" /></Ico>;
const LayerIcon = () => <Ico w={16} h={14}><LayerStack y="0" s=".95" c="#e8e8e8" /></Ico>;
const SmallPot = () => <Ico w={16} h={12}><Teapot x="0" y="-1" s=".72" /></Ico>;

const Swatch = ({ plastic }) => {
	const dots = [];
	for (let i = 0; i < 8; i++) {
		for (let j = 0; j < 9; j++) {
			const c = ["#1020c0", "#10a030", "#c01818", "#0a0a0a"][(i + j * 3) % 4];
			dots.push(<rect key={i + "-" + j} x={i * 2} y={j * 2} width="2" height="2" fill={c} />);
		}
	}
	return (
		<Ico w={16} h={18}>
			{dots}
			<circle cx="8" cy="9" r="6.5" fill={plastic ? "#6a2a18" : "#5f6a60"} />
			{!plastic && <path d="M3 13 C6 9 10 10 13 5" stroke="#a08c6c" strokeWidth="1.4" fill="none" />}
		</Ico>
	);
};

/* ---------- content ---------- */

const menus = [["Edit", 44], ["Tools", 53], ["Group", 57], ["Views", 54], ["Create", 53], ["Modifiers", 64], ["Animation", 70], ["Graph Editors", 90], ["Rendering", 78], ["Customize", 80], ["MAXScript", 80], ["Help", 44], ["Laubwerk", 70]];

const assets = [
	{ indent: 23, icon: <FileCube />, name: "Autodesk Vault 2012", status: "Logged Out ..." },
	{ indent: 39, icon: <MaxFile />, name: "Bronse_Home_Key_With_House_Figure_vray.max", status: "Network Path" },
	{ indent: 56, icon: <MapsIcon />, name: "Maps / Shaders", status: "" },
	{ indent: 72, icon: <PngIcon />, name: "metal_bump.png", status: "Found" },
	{ indent: 72, icon: <PngIcon />, name: "metal_glossiness.png", status: "Found" },
	{ indent: 72, icon: <PngIcon />, name: "metal_white_reflection.png", status: "Found" },
	{ indent: 72, icon: <PngIcon />, name: "metal_yellow_reflection.png", status: "Found" },
	{ indent: 0, name: "", status: "" },
	{ indent: 0, name: "", status: "" },
];

const layerChildren = ["key", "key_ring", "trinket_part1", "trinket_ring", "trinket_part2", "house_key"];

const materials = [
	{ name: "metal_white  ( VRayMtl )  [key_ring, trinket_part2, trinket_ring]", flag: true },
	{ name: "metal_yellow  ( VRayMtl )  [key]", flag: true, on: true },
	{ name: "plastic  ( VRayMtl )  [trinket_part1]", plastic: true },
];

const LayerCols = ({ box, check }) => (
	<>
		<LayerCell>
			{box && <Icon width="12" height="12" viewBox="0 0 12 12"><rect x="1" y="1" width="10" height="10" rx="1.5" fill="none" stroke="#eee" strokeWidth="1.5" /></Icon>}
			{check && <Icon width="14" height="12" viewBox="0 0 14 12"><path d="M1 6 L5 10 L13 1" fill="none" stroke="#111" strokeWidth="1.3" /></Icon>}
		</LayerCell>
		<LayerCell><Dash /></LayerCell>
		<LayerCell><Dash /></LayerCell>
		<LayerCell><SmallPot /></LayerCell>
	</>
);

const App = () => (
	<Page>
		<GlobalStyle />
		<Header>
			<LogoBox viewBox="0 0 39 41">
				<rect width="39" height="41" fill="#0d565c" stroke="#9ab" />
				<path d="M0 0 H39 V14 L0 30Z" fill="#13757c" />
				<rect x="6" y="6" width="22" height="29" rx="7" fill="none" stroke="#f2f2f2" strokeWidth="2.4" />
				<path d="M22 13 C14 10 10 15 11 21 C12 28 22 27 22 21 C22 17 16 17 16 21" fill="none" stroke="#f2f2f2" strokeWidth="2.4" />
				<path d="M31 19 H37 L34 23Z" fill="#111" />
			</LogoBox>
			<HeaderColumn>
				<TitleRow>
					<QuickBar>
						<Ico w={20} h={20}><path d="M3 2 H12 L17 7 V18 H3Z" fill="#f4f4f4" stroke="#333" /></Ico>
						<Spacer $w={2} />
						<Ico w={20} h={20}><path d="M2 5 H8 L10 7 H16 V16 H2Z" fill="#eee" stroke="#333" /><path d="M2 16 L6 10 H19 L16 16Z" fill="#ccc" stroke="#333" /></Ico>
						<Spacer $w={3} />
						<Ico w={20} h={20}><rect x="3" y="1" width="14" height="18" rx="2" fill="#eee" stroke="#333" /><rect x="6" y="2" width="8" height="6" fill="#555" /><rect x="6" y="12" width="8" height="6" fill="#888" /></Ico>
						<Spacer $w={1} />
						<Ico w={22} h={20}><path d="M2 9 L9 3 V7 C16 7 19 11 18 17 C16 13 13 12 9 12 V15Z" fill="#eee" stroke="#333" /></Ico>
						<Icon width="8" height="5" viewBox="0 0 8 4"><path d="M1 0 H7 L4 4Z" fill="#555" /></Icon>
						<Spacer $w={3} />
						<Ico w={22} h={20}><path d="M20 9 L13 3 V7 C6 7 3 11 4 17 C6 13 9 12 13 12 V15Z" fill="#eee" stroke="#333" /></Ico>
						<Icon width="8" height="5" viewBox="0 0 8 4"><path d="M1 0 H7 L4 4Z" fill="#555" /></Icon>
						<Spacer $w={4} />
						<Ico w={22} h={22}><rect x="1" y="2" width="11" height="10" fill="#eee" stroke="#333" /><rect x="9" y="8" width="10" height="13" fill="#eee" stroke="#333" /><rect x="11" y="14" width="6" height="5" fill="#3a78d8" /></Ico>
						<Spacer $w={2} />
						<Icon width="9" height="9" viewBox="0 0 9 9"><path d="M0 0 H9 V2 H0Z M0 4 H9 L4.5 9Z" fill="#111" /></Icon>
					</QuickBar>
					<TitleText $w={164} $ml={270}>Autodesk 3ds Max  2012 x64</TitleText>
					<TitleText $w={526}>Bronse_Home_Key_With_House_Figure_vray.max</TitleText>
					<SearchGroup>
						<Icon width="6" height="9" viewBox="0 0 6 9"><path d="M0 0 L6 4.5 L0 9Z" fill="#111" /></Icon>
						<SearchInput>Type a keyword or phrase</SearchInput>
						<Spacer $w={5} />
						<Ico w={18} h={18}><rect x="2" y="3" width="5" height="13" rx="2" fill="#eee" stroke="#222" /><rect x="10" y="3" width="5" height="13" rx="2" fill="#eee" stroke="#222" /><rect x="6" y="6" width="5" height="4" fill="#222" /></Ico>
						<Spacer $w={6} />
						<Ico w={18} h={18}><circle cx="6" cy="6" r="4.5" fill="#eee" stroke="#222" /><path d="M8 9 L15 16" stroke="#eee" strokeWidth="3" /></Ico>
						<Spacer $w={5} />
						<Ico w={18} h={18}><path d="M3 2 C6 8 10 10 15 10 C13 6 8 2 3 2Z" fill="#eee" stroke="#222" /><path d="M8 9 L5 17 H13 L10 10" fill="#ddd" stroke="#222" /></Ico>
						<Spacer $w={6} />
						<Ico w={18} h={18}><path d="M9 1 L11 7 H17 L12 10.5 L14 17 L9 13 L4 17 L6 10.5 L1 7 H7Z" fill="#eee" stroke="#222" /></Ico>
						<Spacer $w={17} />
						<Ico w={18} h={18}><circle cx="9" cy="9" r="8" fill="#f2f2f2" stroke="#666" /><circle cx="9" cy="9" r="6.4" fill="#2a4fc0" /><text x="6" y="13" fontSize="11" fontWeight="700" fontFamily="Liberation Sans, sans-serif" fill="#fff">?</text></Ico>
						<Spacer $w={6} />
						<Icon width="6" height="4" viewBox="0 0 6 4"><path d="M0 0 H6 L3 4Z" fill="#555" /></Icon>
					</SearchGroup>
					<WinControls>
						<Icon width="10" height="10" viewBox="0 0 10 10"><rect y="8" width="10" height="2" fill="#111" /></Icon>
						<Icon width="10" height="10" viewBox="0 0 10 10"><rect x="1" y="1" width="8" height="8" fill="none" stroke="#111" strokeWidth="1.6" /></Icon>
						<span>X</span>
					</WinControls>
				</TitleRow>
				<MenuRow>
					{menus.map(([label, w]) => <MenuItem key={label} $w={w}>{label}</MenuItem>)}
				</MenuRow>
			</HeaderColumn>
		</Header>

		<ToolbarWrap>
			<Toolbar>
				<Grip />
				<Tool $w={30}>{toolIcons.link}</Tool>
				<Tool $w={32}>{toolIcons.unlink}</Tool>
				<Tool $w={33}>{toolIcons.bind}</Tool>
				<ToolSep $w={6} />
				<Combo $w={69}>All<ComboEnd $dark><Arrow /></ComboEnd></Combo>
				<Tool $w={33}>{toolIcons.select}</Tool>
				<Tool $w={31}>{toolIcons.byName}</Tool>
				<Tool $w={32}>{toolIcons.region}</Tool>
				<Tool $w={32}>{toolIcons.windowSel}</Tool>
				<ToolSep $w={6} />
				<Tool $w={32}>{toolIcons.move}</Tool>
				<Tool $w={32}>{toolIcons.rotate}</Tool>
				<Tool $w={33}>{toolIcons.scale}</Tool>
				<Combo $w={69}>View<ComboEnd $dark><Arrow /></ComboEnd></Combo>
				<Tool $w={33}>{toolIcons.pivot}</Tool>
				<ToolSep $w={5} />
				<Tool $w={32}>{toolIcons.manip}</Tool>
				<Tool $w={33}>{toolIcons.keyboard}</Tool>
				<ToolSep $w={6} />
				<Tool $w={28}>{toolIcons.snap3}</Tool>
				<Tool $w={34}>{toolIcons.snapAngle}</Tool>
				<Tool $w={32}>{toolIcons.snapPercent}</Tool>
				<Tool $w={34}>{toolIcons.snapSpin}</Tool>
				<ToolSep $w={6} />
				<Tool $w={30}>{toolIcons.named}</Tool>
				<Spacer $w={3} />
				<Combo $w={117}>Create Selection Se<ComboEnd><Arrow /></ComboEnd></Combo>
				<ToolSep $w={8} />
				<Tool $w={33}>{toolIcons.mirror}</Tool>
				<Tool $w={29}>{toolIcons.align}</Tool>
				<ToolSep $w={8} />
				<Tool $w={31} $on>{toolIcons.layer}</Tool>
				<ToolSep $w={8} />
				<Tool $w={30}>{toolIcons.explorer}</Tool>
				<Tool $w={32}>{toolIcons.curve}</Tool>
				<Tool $w={31}>{toolIcons.schematic}</Tool>
				<ToolSep $w={7} />
				<Tool $w={31} $on>{toolIcons.material}</Tool>
				<ToolSep $w={8} />
				<Tool $w={30}>{toolIcons.renderSetup}</Tool>
				<Tool $w={33}>{toolIcons.renderFrame}</Tool>
				<Tool $w={33}>{toolIcons.render}</Tool>
				<Spacer $w={8} />
				<ToolLabel $w={85}>PixelSquid</ToolLabel>
				<ToolLabel $w={75}>247</ToolLabel>
				<ToolLabel $w={44}>A</ToolLabel>
				<ToolLabel $w={66}>Unfreeze All</ToolLabel>
			</Toolbar>
		</ToolbarWrap>

		<Body>
			<LeftStrip />
			<Viewport>
				<Scene width="1407" height="829" viewBox="6 89 1407 829">
					<path d={gridPath} fill="none" stroke="#4e4e4e" strokeWidth="1" />
					<path d="M343 247 L596 680 M53 586 L863 368" fill="none" stroke="#0d0d0d" strokeWidth="1" />
					<path d={pinkSolid} fill="none" stroke="#f57fb4" strokeWidth="1.2" />
					<path d="M143 697 L344 640 M909 481 L733 530" fill="none" stroke="#e07aa8" strokeWidth="1" strokeDasharray="1.5 2" />

					<g transform="translate(400 310) scale(.3333)" fill="none" strokeLinejoin="round">
						<path d={ringMesh} stroke="#6e6e6e" strokeWidth="4.6" />
						<circle cx="530" cy="198" r="47" stroke="#5c5c5c" strokeWidth="30" />
						<circle cx="530" cy="198" r="47" stroke="#1c1c1c" strokeWidth="28" strokeDasharray="3 8" />
						<path d={innerWire} stroke="#565656" strokeWidth="3" />
						<path d={houseFill} fill="#a94d2b" fillRule="evenodd" stroke="#6e6e6e" strokeWidth="9" />
						<path d={houseMesh} stroke="#7c3a24" strokeWidth="2.2" />
						<path d="M560 215 L740 420" stroke="#7a3014" strokeWidth="9" />
					</g>

					<g transform="translate(50 320) scale(.3333)" fill="none" stroke="#fff" strokeLinejoin="round">
						<path d={keyFill} fill="#3b2f29" fillRule="evenodd" stroke="none" />
						<path d={bladeTop} strokeWidth="3" />
						<path d={bladeLow} strokeWidth="3" />
						<path d={bowPlate} strokeWidth="3" />
						<path d={bowBand} strokeWidth="3.2" />
						<path d={bowMisc} strokeWidth="3.2" />
						<path d={keyFill} strokeWidth="5" fillRule="evenodd" />
						<path d="M735 310 L110 490" strokeWidth="7" />
						<path d="M728 345 L100 515" strokeWidth="6" />
						<path d="M725 395 L105 555" strokeWidth="8" stroke="#e4e4e4" />
						<path d="M722 262 C715 340 770 480 810 500" strokeWidth="7" />
						<rect x="1140" y="300" width="22" height="30" fill="#0c0c0c" stroke="none" />
						<path d="M1010 270 C1080 275 1170 265 1260 255 M1010 300 C1080 305 1170 295 1260 290 M1010 285 C1080 290 1170 280 1260 272" stroke="#6e6e6e" strokeWidth="4.6" />
						<path d="M605 165 L625 395" stroke="#777" strokeWidth="3" />
						<path d="M548 232 L632 398 L915 325" stroke="#c81818" strokeWidth="3.4" />
					</g>
					<text x="249" y="371" fill="#777" fontSize="10" fontFamily="Liberation Sans, sans-serif">z</text>
					<text x="230" y="392" fill="#c81818" fontSize="10" fontFamily="Liberation Sans, sans-serif">y</text>
					<text x="354" y="423" fill="#c81818" fontSize="10" fontFamily="Liberation Sans, sans-serif">x</text>

					<path d="M31 893 V875" stroke="#2040d0" strokeWidth="1.2" />
					<path d="M31 893 L53 888" stroke="#c81818" strokeWidth="1.2" />
					<path d="M31 893 L24 878" stroke="#20a030" strokeWidth="1.2" />
					<text x="31" y="871" fill="#2040d0" fontSize="10" fontFamily="Liberation Sans, sans-serif">z</text>
					<text x="22" y="874" fill="#20a030" fontSize="10" fontFamily="Liberation Sans, sans-serif">y</text>
					<text x="55" y="884" fill="#c81818" fontSize="10" fontFamily="Liberation Sans, sans-serif">x</text>
				</Scene>
				<ViewLabel>[ + ] [ Perspective ] [ Realistic + Edged Faces ]</ViewLabel>
				<Stats>
					<span />
					<span>Total</span>
					<span>Polys:</span>
					<span>12 260</span>
					<span>Verts:</span>
					<span>6 130</span>
					<span />
					<span />
					<span>FPS:</span>
					<span>77.598</span>
				</Stats>
			</Viewport>

			<Panel>
				<PanelTabs>
					{["burst", "arc", "tree", "motion", "display", "hammer"].map(k => (
						<PanelTab key={k} $on={k === "arc"}><TabIcon kind={k} /></PanelTab>
					))}
				</PanelTabs>
				<NameRow>
					<Field $w={147} $h={18}>key</Field>
					<ColorSwatch />
				</NameRow>
				<ModList>Modifier List<ModArrow><Arrow /></ModArrow></ModList>
				<StackBox>
					<StackRow $on $pl={8} $gap={22}>
						<Ico w={11} h={14}><circle cx="5.5" cy="5" r="4.5" fill="#f4f4f4" stroke="#111" /><rect x="3.5" y="9.5" width="4" height="4" fill="#f4f4f4" stroke="#111" /></Ico>
						TurboSmooth
					</StackRow>
					<StackRow $pl={6} $gap={6}>
						<StackPlus>+</StackPlus>
						Editable Poly
					</StackRow>
				</StackBox>
				<StackTools>
					<StackBtn $w={26}><Ico w={17} h={11}><path d="M0 5.5 H5" stroke="#ddd" /><rect x="5" y="1" width="3" height="9" fill="#ddd" /><rect x="8" y="3" width="6" height="5" fill="#555" stroke="#ddd" /><rect x="14" y="1" width="2" height="9" fill="#ddd" /></Ico></StackBtn>
					<ToolSep $w={1} />
					<Spacer $w={4} />
					<StackBtn $w={24} $on><Ico w={8} h={15}><path d="M0 0 H8 V2 H5.500 V13 H8 V15 H0 V13 H2.500 V2 H0Z" fill="#f4f4f4" /></Ico></StackBtn>
					<Spacer $w={6} />
					<ToolSep $w={1} />
					<StackBtn $w={28}><Ico w={15} h={14}><path d="M1 1 L7 9 L14 1" fill="none" stroke="#ddd" /><circle cx="7.5" cy="10" r="3.2" fill="#f4f4f4" /></Ico></StackBtn>
					<StackBtn $w={20}><Ico w={10} h={14}><rect x="1" y="4" width="8" height="9" rx="3" fill="#eee" /><path d="M2 4 C2 0 8 0 8 4" fill="none" stroke="#eee" strokeWidth="1.4" /></Ico></StackBtn>
					<Spacer $w={9} />
					<ToolSep $w={1} />
					<StackBtn $w={32}><Ico w={16} h={16}><rect x="0" y="0" width="13" height="15" fill="#dfe4ea" stroke="#1a3fa8" /><rect x="0" y="0" width="13" height="3" fill="#1a3fa8" /><rect x="7" y="7" width="9" height="8" fill="#777" /></Ico></StackBtn>
				</StackTools>
				<Divider />
				<RolloutHead><RolloutDash>-</RolloutDash><RolloutTitle>TurboSmooth</RolloutTitle></RolloutHead>
				<RolloutBody>
					<Group $h={101}>
						<GroupLegend>Main</GroupLegend>
						<OptRow $mt={9}>
							<OptLabel $grow $right>Iterations:</OptLabel>
							<SpinField>0</SpinField>
							<SpinArrows><Icon width="7" height="11" viewBox="0 0 7 11"><path d="M3.5 0 L7 4 H0Z M0 7 H7 L3.5 11Z" fill="#eee" /></Icon></SpinArrows>
						</OptRow>
						<OptRow $mt={6} $pl={8}>
							<Check><Tick /></Check>
							<OptLabel $grow>Render Iters:</OptLabel>
							<SpinField>3</SpinField>
							<SpinArrows><Icon width="7" height="11" viewBox="0 0 7 11"><path d="M3.5 0 L7 4 H0Z M0 7 H7 L3.5 11Z" fill="#eee" /></Icon></SpinArrows>
						</OptRow>
						<OptRow $mt={12} $pl={8}><Check><Tick /></Check><OptLabel>Isoline Display</OptLabel></OptRow>
						<OptRow $mt={5} $pl={8}><Check /><OptLabel>Explicit Normals</OptLabel></OptRow>
					</Group>
					<Group $h={86}>
						<GroupLegend>Surface Parameters</GroupLegend>
						<OptRow $mt={9} $pl={9}><Check><Tick /></Check><OptLabel>Smooth Result</OptLabel></OptRow>
						<OptRow $mt={1} $pl={8}><OptLabel>Separate</OptLabel></OptRow>
						<OptRow $mt={1} $pl={39}><Check /><OptLabel>Materials</OptLabel></OptRow>
						<OptRow $mt={2} $pl={39}><Check /><OptLabel>Smoothing Groups</OptLabel></OptRow>
					</Group>
					<Group $h={91}>
						<GroupLegend>Update Options</GroupLegend>
						<OptRow $mt={8} $pl={15}><Radio $on /><OptLabel>Always</OptLabel></OptRow>
						<OptRow $pl={15}><Radio /><OptLabel>When Rendering</OptLabel></OptRow>
						<OptRow $mt={1} $pl={15}><Radio /><OptLabel>Manually</OptLabel></OptRow>
						<UpdateBtn>Update</UpdateBtn>
					</Group>
				</RolloutBody>
			</Panel>
		</Body>

		<Win $x={928} $y={93} $w={479} $h={329}>
			<WinTitle $h={28}>
				<Spiral />
				Asset Tracking
				<WinButtons>
					<WinBtn><Icon width="11" height="5" viewBox="0 0 11 5"><rect x=".5" y=".5" width="10" height="4" fill="none" stroke="#333" /></Icon></WinBtn>
					<WinBtn><Icon width="11" height="8" viewBox="0 0 11 8"><rect x=".5" y=".5" width="10" height="7" fill="none" stroke="#333" /><rect x="3" y="3" width="5" height="2" fill="#333" /></Icon></WinBtn>
					<WinBtn><CloseX /></WinBtn>
				</WinButtons>
			</WinTitle>
			<WinMenu>
				<WinMenuItem $w={46}>Server</WinMenuItem>
				<WinMenuItem $w={32}>File</WinMenuItem>
				<WinMenuItem $w={43}>Paths</WinMenuItem>
				<WinMenuItem $w={194}>Bitmap Performance and Memory</WinMenuItem>
				<WinMenuItem $w={60}>Options</WinMenuItem>
			</WinMenu>
			<WinBody>
				<AssetTools>
					<AssetTool $w={20}><Ico w={14} h={16}><rect x="1" y="1" width="12" height="14" fill="#e8eefc" stroke="#3a6ad8" /><path d="M4 6 C5 3 9 3 10 5 M10 10 C9 13 5 13 4 11" fill="none" stroke="#18a030" strokeWidth="2" /></Ico></AssetTool>
					<AssetTool $w={8} />
					<AssetTool $w={20}><Ico w={12} h={14}><rect x=".5" y=".5" width="11" height="13" fill="#fff" stroke="#111" /><path d="M3 4 H9 M3 7 H9 M3 10 H9" stroke="#222" /></Ico></AssetTool>
					<AssetTool $w={6} />
					<AssetTool $w={20}><Ico w={14} h={14}><rect width="14" height="14" fill="#e8f0f4" stroke="#345" /><rect x="2" y="3" width="4" height="3" fill="#3a6ad8" /><rect x="8" y="7" width="4" height="3" fill="#d0a020" /><path d="M4 6 L9 8" stroke="#333" /></Ico></AssetTool>
					<AssetTool $w={24} $on $ml={5}><Ico w={14} h={13}><rect x=".5" y=".5" width="13" height="12" fill="#fff" stroke="#3a6ad8" /><path d="M0 4 H14 M0 8 H14 M5 0 V13 M9 0 V13" stroke="#3a6ad8" /></Ico></AssetTool>
					<AssetTool $w={18} $ml={307}><Ico w={16} h={16}><circle cx="6" cy="10" r="5" fill="#2a4fc0" /><text x="6" y="12" fontSize="14" fontWeight="700" fontFamily="Liberation Sans, sans-serif" fill="#ddd">?</text></Ico></AssetTool>
					<AssetTool $w={18} $ml={9}><Ico w={16} h={16}><rect x="2" y="2" width="10" height="12" fill="#999" /><text x="5" y="12" fontSize="14" fontWeight="700" fontFamily="Liberation Sans, sans-serif" fill="#ddd">?</text></Ico></AssetTool>
				</AssetTools>
				<TableFrame $w={459} $h={211} $ml={3}>
					<AssetHead>
						<HeadCell $pl={6}>Name</HeadCell>
						<HeadCell $pl={6}>Status</HeadCell>
						<HeadCell $pl={6}>Proxy</HeadCell>
					</AssetHead>
					<AssetRows>
						{assets.map((a, i) => (
							<AssetRow key={i}>
								<NameCell $indent={a.indent}>{a.icon}{a.name}</NameCell>
								<StatusCell>{a.status}</StatusCell>
								<div />
							</AssetRow>
						))}
					</AssetRows>
					<HScroll>
						<Icon width="5" height="8" viewBox="0 0 5 8"><path d="M5 0 L0 4 L5 8Z" fill="#222" /></Icon>
						<ScrollThumb $w={319} $ml={8}>|||</ScrollThumb>
						<Icon width="5" height="8" viewBox="0 0 5 8"><path d="M0 0 L5 4 L0 8Z" fill="#222" /></Icon>
					</HScroll>
				</TableFrame>
				<StatusBox />
			</WinBody>
		</Win>

		<Win $x={928} $y={441} $w={316} $h={291}>
			<WinTitle $h={29}>
				<Spiral />
				Layer: house_key
				<WinButtons>
					<WinBtn><Icon width="9" height="12" viewBox="0 0 9 12"><path d="M1 3 C1 0 8 0 8 3 C8 6 4.500 5 4.500 8.500" fill="none" stroke="#333" strokeWidth="1.6" /><rect x="3.500" y="10" width="2" height="2" fill="#333" /></Icon></WinBtn>
					<WinBtn><CloseX /></WinBtn>
				</WinButtons>
			</WinTitle>
			<WinBody>
				<LayerTools>
					<LayerTool><Ico w={18} h={17}><LayerStack y="1" /><circle cx="14" cy="13" r="3.5" fill="#e8541c" /></Ico></LayerTool>
					<LayerTool><Ico w={16} h={16}><path d="M2 0 L8 6 L14 0 L16 2 L10 8 L16 14 L14 16 L8 10 L2 16 L0 14 L6 8 L0 2Z" fill="#bdbdbd" /></Ico></LayerTool>
					<LayerTool><Ico w={14} h={14}><path d="M6 1 H8 V6 H13 V8 H8 V13 H6 V8 H1 V6 H6Z" fill="#f4f4f4" /></Ico></LayerTool>
					<LayerTool><Ico w={18} h={17}><Cube x="1" y="1" s=".8" /><Cursor x="10" y="5" s=".8" /></Ico></LayerTool>
					<LayerTool><Ico w={18} h={17}><LayerStack y="1" /><Cursor x="10" y="5" s=".8" /></Ico></LayerTool>
					<LayerTool><Ico w={18} h={17}><LayerStack y="1" /><circle cx="13" cy="12" r="3" fill="#a8d8f0" /></Ico></LayerTool>
					<LayerTool><Ico w={18} h={17}><LayerStack y="1" /><path d="M14 8 V16 M10 10 L18 14 M18 10 L10 14" stroke="#a8d8f0" strokeWidth="1.5" /></Ico></LayerTool>
				</LayerTools>
				<TableFrame $w={282} $h={216} $ml={8}>
					<LayerHead>
						<HeadCell $pl={6}>Layers</HeadCell>
						<HeadCell />
						<HeadCell $center>Hide</HeadCell>
						<HeadCell $center>Freeze</HeadCell>
						<HeadCell $center>Render</HeadCell>
					</LayerHead>
					<LayerRows>
						<LayerRow>
							<LayerName $pl={16} $gap={2}><LayerIcon /><LayerText>0 (default)</LayerText></LayerName>
							<LayerCols box />
						</LayerRow>
						<LayerRow>
							<LayerName $pl={2} $gap={2} $on><TreeBox>-</TreeBox><LayerIcon /><LayerText>house_key</LayerText></LayerName>
							<LayerCols check />
						</LayerRow>
						{layerChildren.map(name => (
							<LayerRow key={name}>
								<LayerName $pl={33} $gap={4}><MeshIcon /><LayerText>{name}</LayerText></LayerName>
								<LayerCols />
							</LayerRow>
						))}
					</LayerRows>
					<HScroll>
						<Icon width="5" height="8" viewBox="0 0 5 8"><path d="M5 0 L0 4 L5 8Z" fill="#222" /></Icon>
						<ScrollThumb $w={179} $ml={8}>|||</ScrollThumb>
						<Icon width="5" height="8" viewBox="0 0 5 8"><path d="M0 0 L5 4 L0 8Z" fill="#222" /></Icon>
					</HScroll>
				</TableFrame>
			</WinBody>
		</Win>

		<Win $x={306} $y={678} $w={529} $h={199}>
			<WinTitle $h={29} $pl={2}>
				<Spiral />
				Material/Map Browser
				<WinButtons>
					<WinBtn><CloseX /></WinBtn>
				</WinButtons>
			</WinTitle>
			<WinBody>
				<BrowserSearch>
					<Icon width="12" height="9" viewBox="0 0 12 9"><path d="M0 0 H12 V2 H0Z M0 3.500 H12 L6 9Z" fill="#111" /></Icon>
					<SearchField>Search by Name ...</SearchField>
				</BrowserSearch>
				<BrowserMain>
					<BrowserList>
						<SectionHead>-  Scene Materials</SectionHead>
						<MatArea>
							<MatList>
								{materials.map(m => (
									<MatRow key={m.name} $on={m.on}>
										<Spacer $w={1} />
										<Swatch plastic={m.plastic} />
										<MatName>{m.name}</MatName>
										{m.flag && <MatFlag />}
									</MatRow>
								))}
							</MatList>
							<VTrack />
						</MatArea>
					</BrowserList>
					<VScroll><VThumb>≡</VThumb></VScroll>
				</BrowserMain>
			</WinBody>
		</Win>
	</Page>
);

export default App;
